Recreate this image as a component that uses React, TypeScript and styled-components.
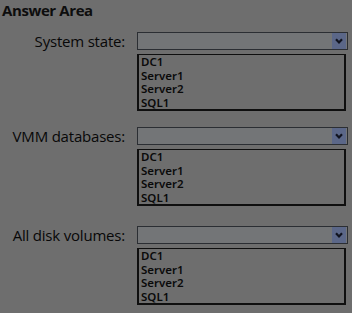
import React from "react";
import styled, { createGlobalStyle } from "styled-components";

const Global = createGlobalStyle`
  html, body { margin: 0; padding: 0; background: #6e6e6e; }
  body { width: 352px; height: 313px; overflow: hidden; font-family: "Open Sans", "Noto Sans", sans-serif; color: #0d0d0d; }
`;

const Page = styled.div`
  padding: 0 0 0 2px;
  box-sizing: border-box;
`;

const Title = styled.div`
  font-weight: 700;
  font-size: 15px;
  line-height: 20px;
  letter-spacing: -0.4px;
`;

const Section = styled.div<{ $gap: number }>`
  display: grid;
  grid-template-columns: 123px 211px;
  column-gap: 12px;
  margin-top: ${(p) => p.$gap}px;
`;

const Label = styled.div`
  grid-row: 1;
  text-align: right;
  font-size: 15px;
  line-height: 18px;
  letter-spacing: -0.2px;
  color: #080808;
`;

const Select = styled.div`
  grid-row: 1;
  grid-column: 2;
  height: 18px;
  box-sizing: border-box;
  border: 1px solid #2b2e33;
  background: #737577;
  display: flex;
  justify-content: flex-end;
  align-items: stretch;
  padding: 0 1px 0 0;
`;

const Arrow = styled.div`
  width: 14px;
  background: #5b6788;
  display: flex;
  align-items: center;
  justify-content: center;
`;

const List = styled.div`
  grid-column: 2;
  margin-top: 4px;
  width: 209px;
  height: 57px;
  box-sizing: border-box;
  border: 2px solid #0f0f0f;
  border-top-width: 1px;
  padding: 0 0 0 2px;
`;

const Item = styled.div`
  font-family: "Noto Sans", sans-serif;
  font-weight: 600;
  font-size: 11.5px;
  line-height: 13.5px;
  color: #0a0a0a;
`;

const items = ["DC1", "Server1", "Server2", "SQL1"];

const Dropdown: React.FC<{ label: string; gap: number }> = ({ label, gap }) => (
  <Section $gap={gap}>
    <Label>{label}</Label>
    <Select>
      <Arrow>
        <svg width="8" height="6" viewBox="0 0 8 6">
          <path d="M1 1.2 L4 4.4 L7 1.2" stroke="#10131f" strokeWidth="2.2" fill="none" />
        </svg>
      </Arrow>
    </Select>
    <List>
      {items.map((i) => (
        <Item key={i}>{i}</Item>
      ))}
    </List>
  </Section>
);

export default function App() {
  return (
    <Page>
      <Global />
      <Title>Answer Area</Title>
      <Dropdown label="System state:" gap={12} />
      <Dropdown label="VMM databases:" gap={16} />
      <Dropdown label="All disk volumes:" gap={20} />
    </Page>
  );
}
